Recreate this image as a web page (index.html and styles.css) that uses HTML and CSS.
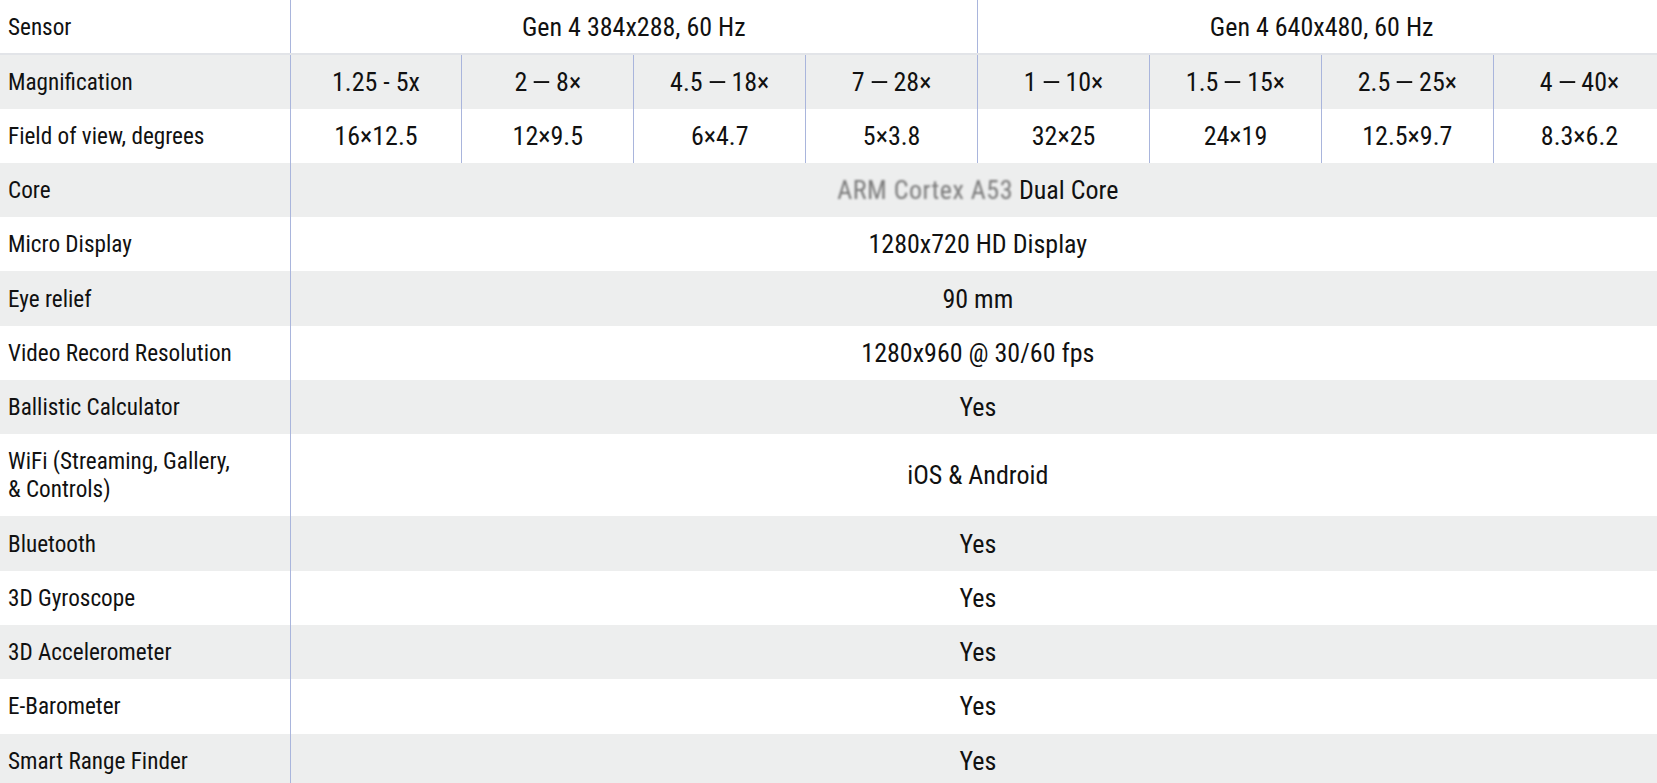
FILE: index.html
```html
<!DOCTYPE html>
<html>
<head>
<meta charset="utf-8">
<link rel="stylesheet" href="styles.css">
</head>
<body>
<table class="specs">
  <colgroup>
    <col class="c-label">
    <col class="c-val"><col class="c-val"><col class="c-val"><col class="c-val">
    <col class="c-val"><col class="c-val"><col class="c-val"><col class="c-val">
  </colgroup>
  <tbody>
    <tr class="head">
      <td class="label">Sensor</td>
      <td class="val sep" colspan="4">Gen 4 384x288, 60 Hz</td>
      <td class="val sep" colspan="4">Gen 4 640x480, 60 Hz</td>
    </tr>
    <tr class="alt">
      <td class="label">Magnification</td>
      <td class="val">1.25 - 5x</td>
      <td class="val sep">2 <span class="dash">–</span> 8×</td>
      <td class="val sep">4.5 <span class="dash">–</span> 18×</td>
      <td class="val sep">7 <span class="dash">–</span> 28×</td>
      <td class="val sep">1 <span class="dash">–</span> 10×</td>
      <td class="val sep">1.5 <span class="dash">–</span> 15×</td>
      <td class="val sep">2.5 <span class="dash">–</span> 25×</td>
      <td class="val sep">4 <span class="dash">–</span> 40×</td>
    </tr>
    <tr>
      <td class="label">Field of view, degrees</td>
      <td class="val">16×12.5</td>
      <td class="val sep">12×9.5</td>
      <td class="val sep">6×4.7</td>
      <td class="val sep">5×3.8</td>
      <td class="val sep">32×25</td>
      <td class="val sep">24×19</td>
      <td class="val sep">12.5×9.7</td>
      <td class="val sep">8.3×6.2</td>
    </tr>
    <tr class="alt">
      <td class="label">Core</td>
      <td class="val" colspan="8"><span class="blur">ARM Cortex A53</span> Dual Core</td>
    </tr>
    <tr>
      <td class="label">Micro Display</td>
      <td class="val" colspan="8">1280x720 HD Display</td>
    </tr>
    <tr class="alt">
      <td class="label">Eye relief</td>
      <td class="val" colspan="8">90 mm</td>
    </tr>
    <tr>
      <td class="label">Video Record Resolution</td>
      <td class="val" colspan="8">1280x960 @ 30/60 fps</td>
    </tr>
    <tr class="alt">
      <td class="label">Ballistic Calculator</td>
      <td class="val" colspan="8">Yes</td>
    </tr>
    <tr class="tall">
      <td class="label">WiFi (Streaming, Gallery,<br>&amp; Controls)</td>
      <td class="val" colspan="8">iOS &amp; Android</td>
    </tr>
    <tr class="alt">
      <td class="label">Bluetooth</td>
      <td class="val" colspan="8">Yes</td>
    </tr>
    <tr>
      <td class="label">3D Gyroscope</td>
      <td class="val" colspan="8">Yes</td>
    </tr>
    <tr class="alt">
      <td class="label">3D Accelerometer</td>
      <td class="val" colspan="8">Yes</td>
    </tr>
    <tr>
      <td class="label">E-Barometer</td>
      <td class="val" colspan="8">Yes</td>
    </tr>
    <tr class="alt">
      <td class="label">Smart Range Finder</td>
      <td class="val" colspan="8">Yes</td>
    </tr>
  </tbody>
</table>
</body>
</html>
```

FILE: styles.css
```css
html, body {
  margin: 0;
  padding: 0;
  background: #ffffff;
  overflow: hidden;
}

.specs {
  width: 1665px;
  border-collapse: collapse;
  table-layout: fixed;
  font-family: "Roboto Condensed", "Liberation Sans Narrow", "Liberation Sans", sans-serif;
  color: #111111;
}

.c-label { width: 290px; }
.c-val { width: 171.9px; }

.specs tr { height: 54.3px; }
.specs tr.tall { height: 82px; }
.specs tr.alt { background: #edeeee; }
.specs tr.head td { border-bottom: 2px solid #e2e4e8; }

.specs td {
  padding: 0;
  vertical-align: middle;
}

.label {
  padding-left: 8px !important;
  font-size: 23.2px;
  line-height: 28px;
  text-align: left;
  border-right: 1px solid #a9b5dc;
}

.val {
  font-size: 26px;
  text-align: center;
}

.dash {
  display: inline-block;
  margin: 0 1px;
  transform: scaleX(1.45);
}

.sep { border-left: 1px solid #a9b5dc; }

.blur {
  display: inline-block;
  color: #7a7a7a;
  filter: blur(1.3px);
  letter-spacing: 0.5px;
}
```
